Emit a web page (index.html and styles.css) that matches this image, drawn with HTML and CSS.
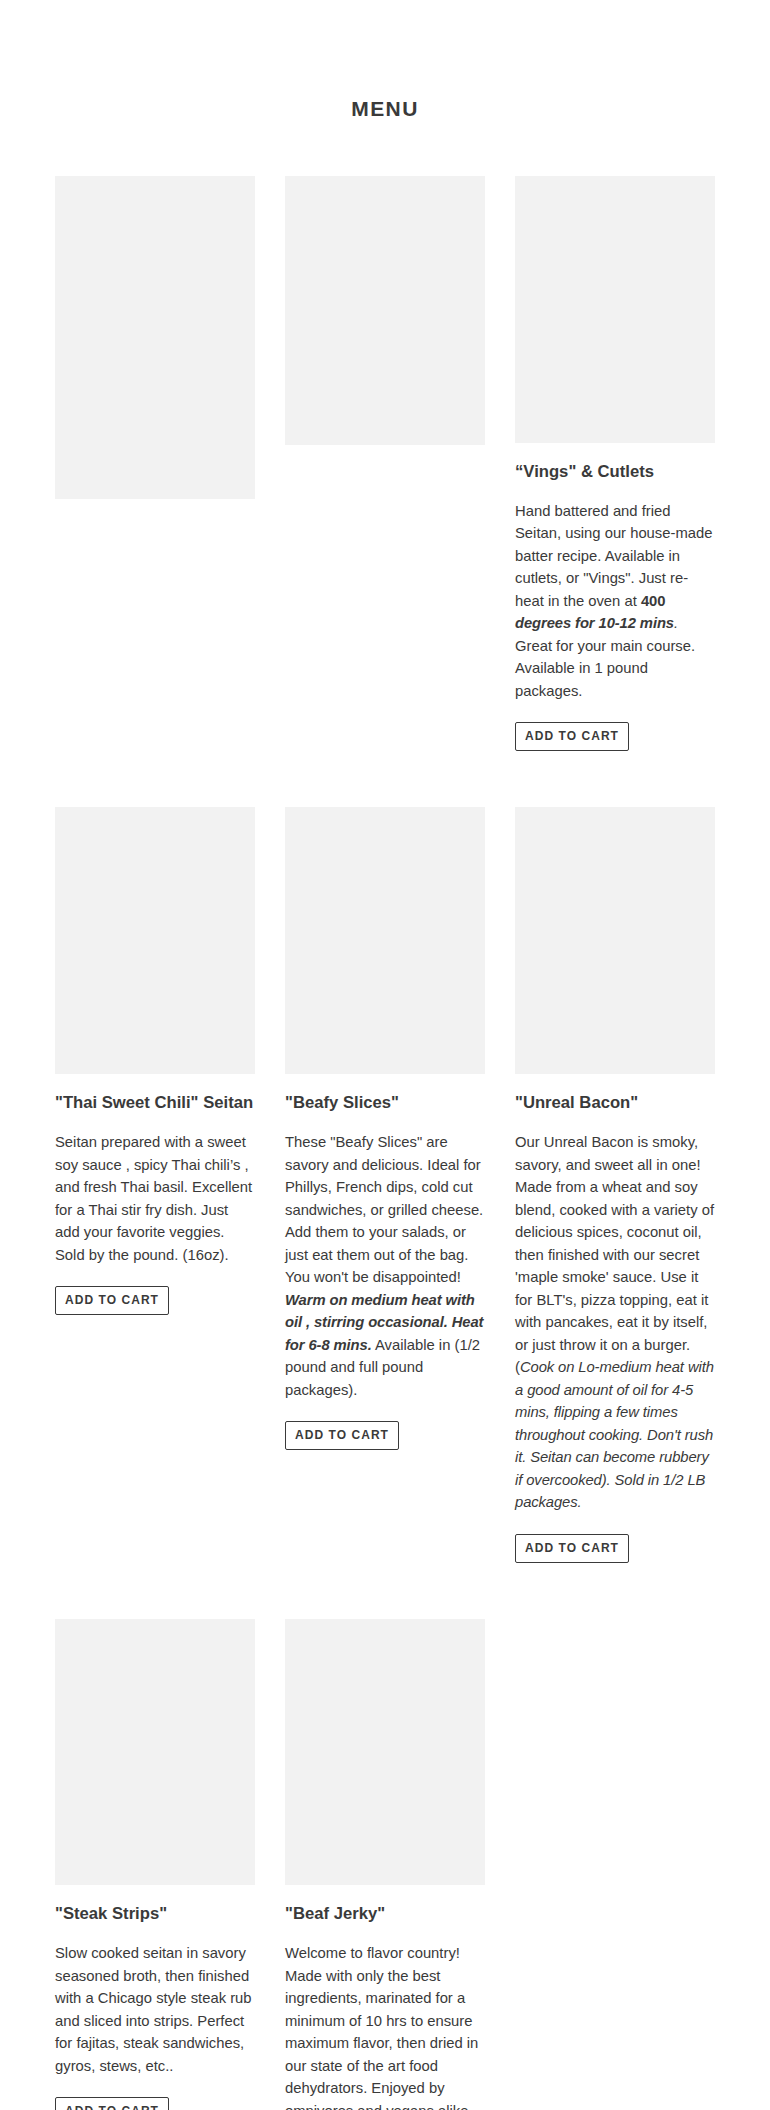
FILE: index.html
```html
<!DOCTYPE html>
<html lang="en">
<head>
  <meta charset="UTF-8">
  <meta name="viewport" content="width=device-width, initial-scale=1.0">
  <title>Menu</title>
  <link rel="stylesheet" href="styles.css">
</head>
<body>
  <div class="page-width">
    <h2 class="section-title">Menu</h2>

    <div class="product-grid">
      <!-- row 1 -->
      <div class="product-card">
        <div class="product-img product-img--tall"></div>
      </div>
      <div class="product-card">
        <div class="product-img product-img--mid"></div>
      </div>
      <div class="product-card">
        <div class="product-img"></div>
        <h3 class="product-title">&ldquo;Vings" &amp; Cutlets</h3>
        <p class="product-desc">Hand battered and fried Seitan, using our house-made batter recipe. Available in cutlets, or "Vings". Just re-heat in the oven at <strong>400 <em>degrees for 10-12 mins</em></strong><em>.</em> Great for your main course. Available in 1 pound packages.</p>
        <button class="add-cart-btn">Add to cart</button>
      </div>

      <!-- row 2 -->
      <div class="product-card">
        <div class="product-img"></div>
        <h3 class="product-title">"Thai Sweet Chili" Seitan</h3>
        <p class="product-desc">Seitan prepared with a sweet soy sauce , spicy Thai chili&rsquo;s , and fresh Thai basil. Excellent for a Thai stir fry dish. Just add your favorite veggies. Sold by the pound. (16oz).</p>
        <button class="add-cart-btn">Add to cart</button>
      </div>
      <div class="product-card">
        <div class="product-img"></div>
        <h3 class="product-title">"Beafy Slices"</h3>
        <p class="product-desc">These "Beafy Slices" are savory and delicious. Ideal for Phillys, French dips, cold cut sandwiches, or grilled cheese. Add them to your salads, or just eat them out of the bag. You won't be disappointed! <strong><em>Warm on medium heat with oil , stirring occasional. Heat for 6-8 mins.</em></strong> Available in (1/2 pound and full pound packages).</p>
        <button class="add-cart-btn">Add to cart</button>
      </div>
      <div class="product-card">
        <div class="product-img"></div>
        <h3 class="product-title">"Unreal Bacon"</h3>
        <p class="product-desc">Our Unreal Bacon is smoky, savory, and sweet all in one! Made from a wheat and soy blend, cooked with a variety of delicious spices, coconut oil, then finished with our secret 'maple smoke' sauce. Use it for BLT's, pizza topping, eat it with pancakes, eat it by itself, or just throw it on a burger. (<em>Cook on Lo-medium heat with a good amount of oil for 4-5 mins, flipping a few times throughout cooking. Don't rush it. Seitan can become rubbery if overcooked). Sold in 1/2 LB packages.</em></p>
        <button class="add-cart-btn">Add to cart</button>
      </div>

      <!-- row 3 -->
      <div class="product-card">
        <div class="product-img"></div>
        <h3 class="product-title">"Steak Strips"</h3>
        <p class="product-desc">Slow cooked seitan in savory seasoned broth, then finished with a Chicago style steak rub and sliced into strips. Perfect for fajitas, steak sandwiches, gyros, stews, etc..</p>
        <button class="add-cart-btn">Add to cart</button>
      </div>
      <div class="product-card">
        <div class="product-img"></div>
        <h3 class="product-title">"Beaf Jerky"</h3>
        <p class="product-desc">Welcome to flavor country! Made with only the best ingredients, marinated for a minimum of 10 hrs to ensure maximum flavor, then dried in our state of the art food dehydrators. Enjoyed by omnivores and vegans alike. Sold in 4oz bags.</p>
        <button class="add-cart-btn">Add to cart</button>
      </div>
    </div>
  </div>
</body>
</html>
```

FILE: styles.css
```css
body {
    margin: 0;
    background: #fff;
    color: #3a3a3a;
    font-family: "Liberation Sans", Arial, Helvetica, sans-serif;
}
.page-width {
    padding: 96px 55px 60px;
}
.section-title {
    margin: 0 0 55px;
    text-align: center;
    font-size: 21px;
    line-height: 1.2;
    font-weight: bold;
    text-transform: uppercase;
    letter-spacing: 1.4px;
}

/* 3칸 그리드 */
.product-grid {
    display: grid;
    grid-template-columns: repeat(3, 200px);
    column-gap: 30px;
    row-gap: 56px;
    align-items: start;
}
.product-img {
    height: 266.67px; /* 3:4 비율 */
    background: #f2f2f2;
}
.product-img--tall {
    height: 323px;
}
.product-img--mid {
    height: 269px;
}
.product-title {
    margin: 19px 0 18px;
    font-size: 16.67px;
    line-height: 20px;
    font-weight: bold;
}
.product-desc {
    margin: 0 0 20px;
    font-size: 14.8px;
    line-height: 22.5px;
}
.product-desc em {
    letter-spacing: -0.1px; /* 이탤릭이 조금 좁게 */
}
.add-cart-btn {
    display: inline-block;
    padding: 6px 9px;
    border: 1px solid #3a3a3a;
    border-radius: 2px;
    background: none;
    color: #3a3a3a;
    font-family: inherit;
    font-size: 12px;
    line-height: 15px;
    font-weight: bold;
    letter-spacing: 1.05px;
    text-transform: uppercase;
    cursor: pointer;
}
```
